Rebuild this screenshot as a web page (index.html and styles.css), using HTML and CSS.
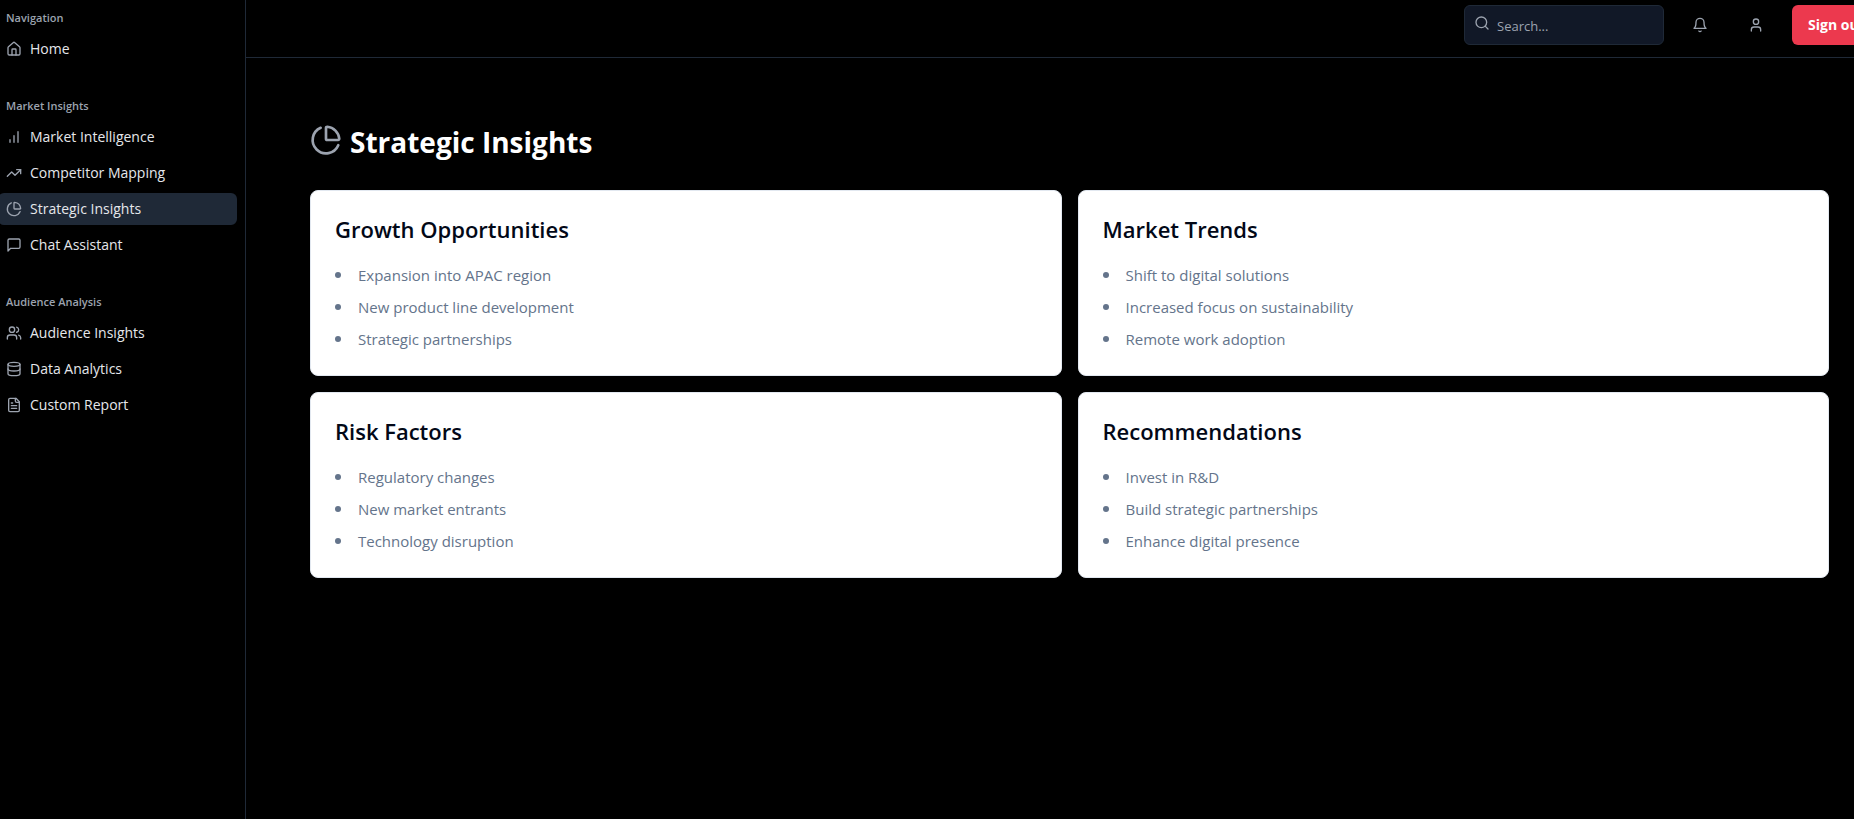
FILE: index.html
```html
<!DOCTYPE html>
<html lang="en">
<head>
<meta charset="utf-8">
<meta name="viewport" content="width=device-width, initial-scale=1">
<title>Strategic Insights</title>
<link rel="stylesheet" href="styles.css">
</head>
<body>
<div class="app">
  <nav class="sidebar" aria-label="Main">
    <section class="nav-group">
      <h2 class="nav-label">Navigation</h2>
      <ul class="nav-list">
        <li><a class="nav-item" href="#"><svg class="icon" viewBox="0 0 24 24"><path d="M15 21v-8a1 1 0 0 0-1-1h-4a1 1 0 0 0-1 1v8"/><path d="M3 10a2 2 0 0 1 .709-1.528l7-5.999a2 2 0 0 1 2.582 0l7 5.999A2 2 0 0 1 21 10v9a2 2 0 0 1-2 2H5a2 2 0 0 1-2-2z"/></svg>Home</a></li>
      </ul>
    </section>
    <section class="nav-group">
      <h2 class="nav-label">Market Insights</h2>
      <ul class="nav-list">
        <li><a class="nav-item" href="#"><svg class="icon" viewBox="0 0 24 24"><path d="M12 20V10M18 20V4M6 20v-4"/></svg>Market Intelligence</a></li>
        <li><a class="nav-item" href="#"><svg class="icon" viewBox="0 0 24 24"><path d="M22 7l-8.500 8.500-5-5L2 17"/><path d="M16 7h6v6"/></svg>Competitor Mapping</a></li>
        <li><a class="nav-item nav-item-active" href="#" aria-current="page"><svg class="icon" viewBox="0 0 24 24"><path d="M21 12c.552 0 1.005-.449.950-.998a10 10 0 0 0-8.953-8.951c-.550-.055-.998.398-.998.950v8a1 1 0 0 0 1 1z"/><path d="M21.210 15.890A10 10 0 1 1 8 2.830"/></svg>Strategic Insights</a></li>
        <li><a class="nav-item" href="#"><svg class="icon" viewBox="0 0 24 24"><path d="M21 15a2 2 0 0 1-2 2H7l-4 4V5a2 2 0 0 1 2-2h14a2 2 0 0 1 2 2z"/></svg>Chat Assistant</a></li>
      </ul>
    </section>
    <section class="nav-group">
      <h2 class="nav-label">Audience Analysis</h2>
      <ul class="nav-list">
        <li><a class="nav-item" href="#"><svg class="icon" viewBox="0 0 24 24"><path d="M16 21v-2a4 4 0 0 0-4-4H6a4 4 0 0 0-4 4v2"/><circle cx="9" cy="7" r="4"/><path d="M22 21v-2a4 4 0 0 0-3-3.870M16 3.130a4 4 0 0 1 0 7.750"/></svg>Audience Insights</a></li>
        <li><a class="nav-item" href="#"><svg class="icon" viewBox="0 0 24 24"><ellipse cx="12" cy="5" rx="9" ry="3"/><path d="M3 5v14a9 3 0 0 0 18 0V5"/><path d="M3 12a9 3 0 0 0 18 0"/></svg>Data Analytics</a></li>
        <li><a class="nav-item" href="#"><svg class="icon" viewBox="0 0 24 24"><path d="M15 2H6a2 2 0 0 0-2 2v16a2 2 0 0 0 2 2h12a2 2 0 0 0 2-2V7z"/><path d="M14 2v4a2 2 0 0 0 2 2h4M10 9H8M16 13H8M16 17H8"/></svg>Custom Report</a></li>
      </ul>
    </section>
  </nav>
  <div class="content">
    <header class="topbar">
      <label class="search">
        <svg class="icon search-icon" viewBox="0 0 24 24"><circle cx="11" cy="11" r="8"/><path d="m21 21-4.300-4.300"/></svg>
        <input class="search-input" type="search" placeholder="Search..." aria-label="Search">
      </label>
      <button class="icon-button" type="button" aria-label="Notifications"><svg class="icon" viewBox="0 0 24 24"><path d="M6 8a6 6 0 0 1 12 0c0 7 3 9 3 9H3s3-2 3-9"/><path d="M10.300 21a1.940 1.940 0 0 0 3.400 0"/></svg></button>
      <button class="icon-button" type="button" aria-label="Account"><svg class="icon" viewBox="0 0 24 24"><path d="M19 21v-2a4 4 0 0 0-4-4H9a4 4 0 0 0-4 4v2"/><circle cx="12" cy="7" r="4"/></svg></button>
      <button class="sign-out" type="button">Sign out</button>
    </header>
    <main class="main">
      <h1 class="page-title"><svg class="icon icon-large" viewBox="0 0 24 24"><path d="M21 12c.552 0 1.005-.449.950-.998a10 10 0 0 0-8.953-8.951c-.550-.055-.998.398-.998.950v8a1 1 0 0 0 1 1z"/><path d="M21.210 15.890A10 10 0 1 1 8 2.830"/></svg>Strategic Insights</h1>
      <div class="cards">
        <section class="card">
          <h2 class="card-title">Growth Opportunities</h2>
          <ul class="card-list"><li>Expansion into APAC region</li><li>New product line development</li><li>Strategic partnerships</li></ul>
        </section>
        <section class="card">
          <h2 class="card-title">Market Trends</h2>
          <ul class="card-list"><li>Shift to digital solutions</li><li>Increased focus on sustainability</li><li>Remote work adoption</li></ul>
        </section>
        <section class="card">
          <h2 class="card-title">Risk Factors</h2>
          <ul class="card-list"><li>Regulatory changes</li><li>New market entrants</li><li>Technology disruption</li></ul>
        </section>
        <section class="card">
          <h2 class="card-title">Recommendations</h2>
          <ul class="card-list"><li>Invest in R&amp;D</li><li>Build strategic partnerships</li><li>Enhance digital presence</li></ul>
        </section>
      </div>
    </main>
  </div>
</div>
</body>
</html>
```
FILE: styles.css
```css
*, *::before, *::after { box-sizing: border-box; }

body {
  margin: 0;
  background: #000;
  color: #fff;
  font-family: "Segoe UI", "Open Sans", "Noto Sans", sans-serif;
  font-size: 15px;
  line-height: 24px;
}

h1, h2, ul { margin: 0; padding: 0; }
button, input { font: inherit; }

.app {
  display: flex;
  min-height: 100vh;
  overflow: hidden;
}

.icon {
  flex: none;
  width: 16px;
  height: 16px;
  fill: none;
  stroke: #9ca3af;
  stroke-width: 2;
  stroke-linecap: round;
  stroke-linejoin: round;
}

.icon-large { width: 32px; height: 32px; }

.sidebar {
  flex: none;
  display: flex;
  flex-direction: column;
  gap: 26px;
  width: 248px;
  margin-left: -2px;
  padding: 3px 8px 0 0;
  border-right: 1px solid #1f2937;
}

.nav-label {
  padding: 0 8px;
  color: #9ca3af;
  font-size: 11px;
  font-weight: 600;
  line-height: 30px;
}

.nav-list {
  display: flex;
  flex-direction: column;
  gap: 4px;
  list-style: none;
}

.nav-item {
  display: flex;
  align-items: center;
  gap: 8px;
  height: 32px;
  padding: 0 8px;
  border-radius: 6px;
  color: #e5e7eb;
  font-size: 14px;
  text-decoration: none;
}

.nav-item-active { background: #1f2937; }

.content { flex: 1; min-width: 0; }

.topbar {
  display: flex;
  justify-content: flex-end;
  gap: 16px;
  height: 58px;
  margin-right: -24px;
  padding-top: 5px;
  border-bottom: 1px solid #1f2937;
}

.search {
  display: flex;
  gap: 7px;
  width: 200px;
  height: 40px;
  padding: 0 9px;
  border: 1px solid #1f2937;
  border-radius: 6px;
  background: #111827;
}

.search-icon { margin-top: 9px; }

.search-input {
  flex: 1;
  min-width: 0;
  padding: 2px 0 0;
  border: 0;
  outline: 0;
  background: transparent;
  color: #fff;
  font-size: 13px;
}

.search-input::placeholder { color: #9ca3af; }

.icon-button {
  display: grid;
  place-items: center;
  width: 40px;
  height: 40px;
  padding: 0;
  border: 0;
  background: transparent;
}

.sign-out {
  width: 86px;
  height: 40px;
  padding: 0 16px;
  border: 0;
  border-radius: 6px;
  background: #ec394e;
  color: #fff;
  font-size: 14px;
  font-weight: 700;
  text-align: left;
  white-space: nowrap;
}

.main { padding: 66px 25px 64px 64px; }

.page-title {
  display: flex;
  align-items: flex-start;
  gap: 8px;
  margin-bottom: 30px;
  font-size: 28px;
  font-weight: 700;
  line-height: 36px;
}

.cards {
  display: grid;
  grid-template-columns: 1fr 1fr;
  gap: 16px;
}

.card {
  padding: 24px;
  border: 1px solid #e2e8f0;
  border-radius: 8px;
  background: #fff;
  color: #020817;
}

.card-title {
  margin-bottom: 20px;
  font-size: 22px;
  font-weight: 600;
  line-height: 28px;
}

.card-list {
  display: flex;
  flex-direction: column;
  gap: 8px;
  color: #64748b;
  list-style: none;
}

.card-list li {
  display: flex;
  align-items: center;
  gap: 17px;
}

.card-list li::before {
  content: "";
  flex: none;
  width: 6px;
  height: 6px;
  border-radius: 50%;
  background: currentColor;
}
```
